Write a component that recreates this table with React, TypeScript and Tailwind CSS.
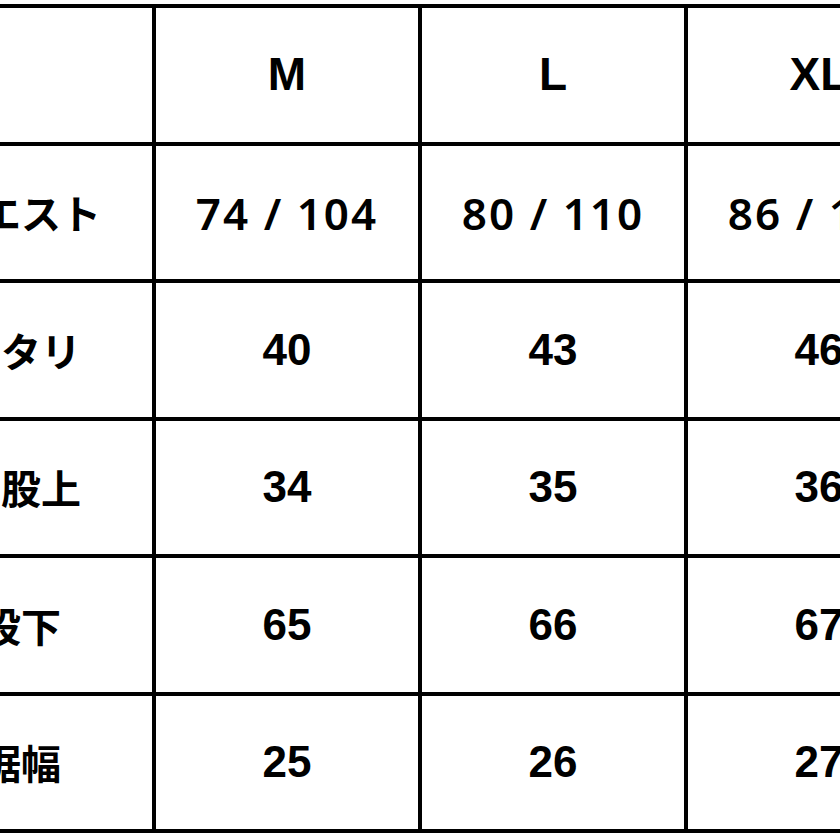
const sizes = ["M", "L", "XL"];

const rows: { label: string; values: string[]; wide?: boolean }[] = [
  { label: "ウエスト", values: ["74 / 104", "80 / 110", "86 / 116"], wide: true },
  { label: "ワタリ", values: ["40", "43", "46"] },
  { label: "前股上", values: ["34", "35", "36"] },
  { label: "股下", values: ["65", "66", "67"] },
  { label: "裾幅", values: ["25", "26", "27"] },
];

function Cell({ children, className = "" }: { children?: React.ReactNode; className?: string }) {
  return (
    <div className={`bg-white h-[133.5px] flex items-center justify-center text-black whitespace-nowrap ${className}`}>
      {children}
    </div>
  );
}

export default function App() {
  return (
    <div className="w-[840px] h-[840px] bg-white overflow-hidden">
      <div className="ml-[-114px] mt-[4px] w-[1068px] grid grid-cols-[262px_262px_262px_262px] gap-[4px] p-[4px] bg-black">
        <Cell />
        {sizes.map((s) => (
          <Cell key={s} className="font-['Liberation_Sans',Arial,sans-serif] font-bold text-[46px]">
            {s}
          </Cell>
        ))}
        {rows.map((r) => (
          <>
            <Cell key={r.label} className="font-['Noto_Sans_CJK_JP',sans-serif] font-semibold text-[40px]">
              {r.label}
            </Cell>
            {r.values.map((v, i) => (
              <Cell
                key={r.label + i}
                className={
                  r.wide
                    ? "font-['Noto_Sans',sans-serif] font-semibold text-[44px] tracking-[2px] pt-[2px]"
                    : "font-['Liberation_Sans',Arial,sans-serif] font-bold text-[44px]"
                }
              >
                {v}
              </Cell>
            ))}
          </>
        ))}
      </div>
    </div>
  );
}
